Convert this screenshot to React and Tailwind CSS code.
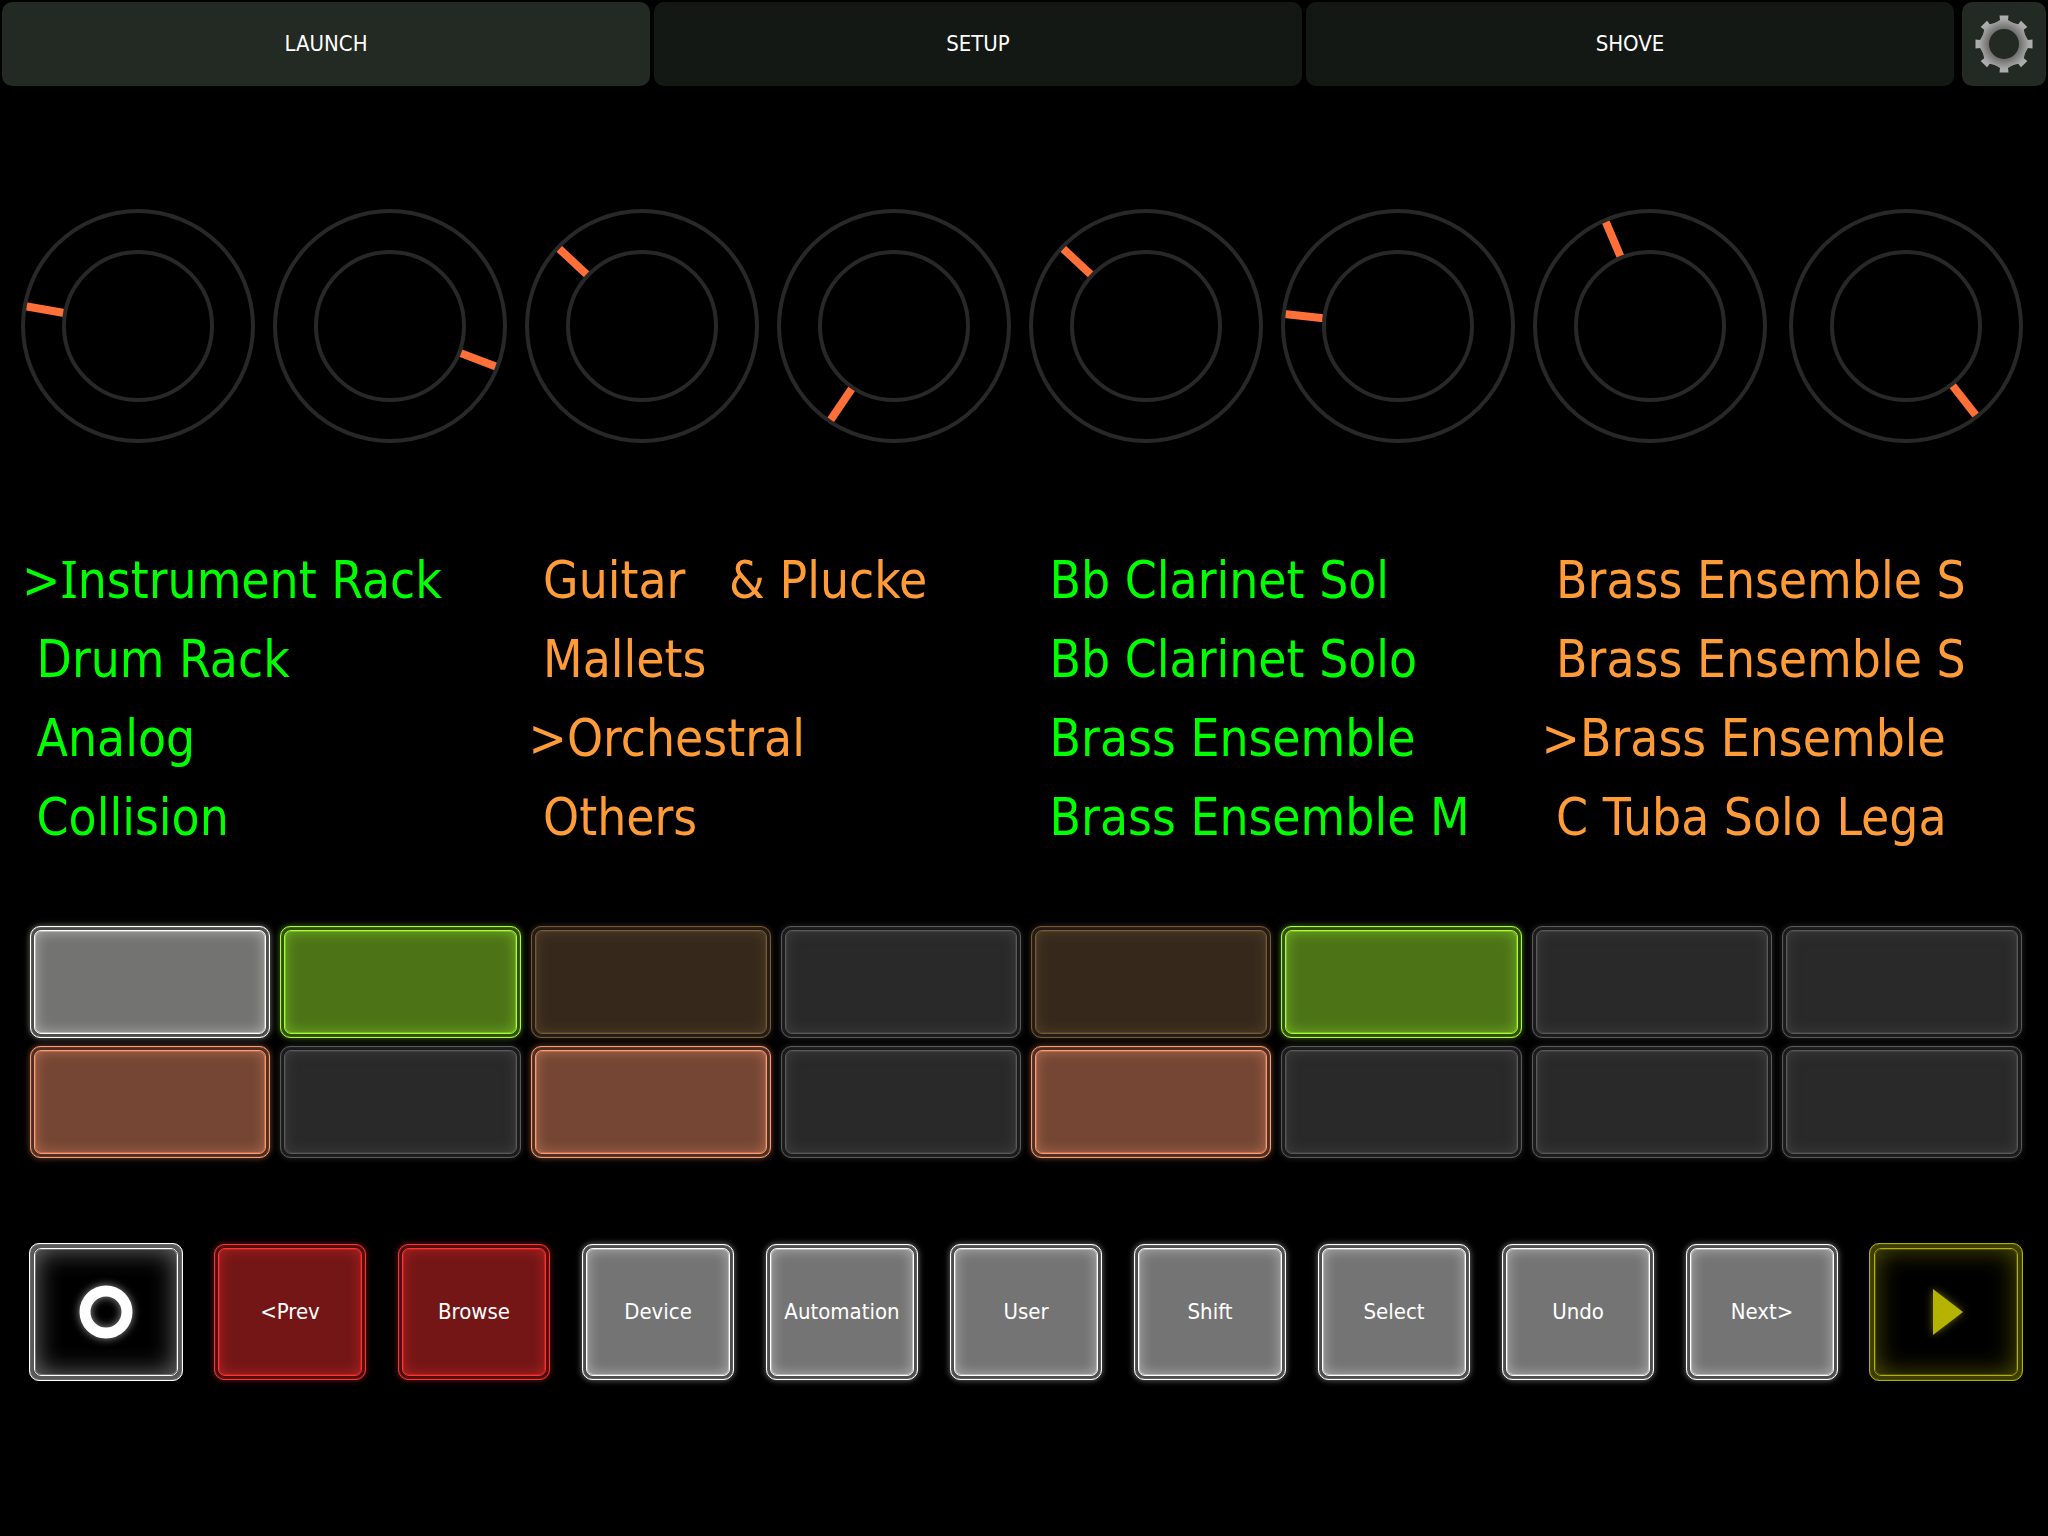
import React from 'react';

const tabs = [
  { label: 'LAUNCH', active: true },
  { label: 'SETUP', active: false },
  { label: 'SHOVE', active: false },
];

// Pointer angles in degrees, clockwise from three o'clock
const knobs = [190, 21, 223, 124, 223, 186, 247, 52];

const screen = [
  { color: 'text-[#00ff00]', lines: ['>Instrument Rack', ' Drum Rack', ' Analog', ' Collision'] },
  { color: 'text-[#ff9c38]', lines: [' Guitar   & Plucke', ' Mallets', '>Orchestral', ' Others'] },
  { color: 'text-[#00ff00]', lines: [' Bb Clarinet Sol', ' Bb Clarinet Solo', ' Brass Ensemble', ' Brass Ensemble M'] },
  { color: 'text-[#ff9c38]', lines: [' Brass Ensemble S', ' Brass Ensemble S', '>Brass Ensemble', ' C Tuba Solo Lega'] },
];

const WHITE = 'text-[#fffffa]';
const GREEN = 'text-[#a6ff33]';
const BROWN = 'text-[#76593a]';
const GREY = 'text-[#595959]';
const SALMON = 'text-[#ff9a72]';
const RED = 'text-[#ff3333]';

const pads = [
  WHITE, GREEN, BROWN, GREY, BROWN, GREEN, GREY, GREY,
  SALMON, GREY, SALMON, GREY, SALMON, GREY, GREY, GREY,
];

const keys = [
  { label: '<Prev', color: RED },
  { label: 'Browse', color: RED },
  { label: 'Device', color: 'text-white' },
  { label: 'Automation', color: 'text-white' },
  { label: 'User', color: 'text-white' },
  { label: 'Shift', color: 'text-white' },
  { label: 'Select', color: 'text-white' },
  { label: 'Undo', color: 'text-white' },
  { label: 'Next>', color: 'text-white' },
];

const Gear = () => (
  <svg viewBox="-30 -30 60 60" className="w-[60px] h-[60px]" aria-hidden="true">
    <defs>
      <radialGradient id="metal" gradientUnits="userSpaceOnUse" cx="0" cy="0" r="29">
        <stop offset="0.5" stopColor="#6a6a6a" />
        <stop offset="0.85" stopColor="#a8a8a8" />
        <stop offset="1" stopColor="#b0b0b0" />
      </radialGradient>
      <mask id="hole">
        <rect x="-30" y="-30" width="60" height="60" fill="white" />
        <circle r="15" fill="black" />
      </mask>
    </defs>
    <g fill="url(#metal)" mask="url(#hole)">
      <circle r="23" />
      {[0, 45, 90, 135, 180, 225, 270, 315].map((a) => (
        <path key={a} d="M-9 -21L-4 -24L-4.5 -28.5H4.5L4 -24L9 -21V-14H-9Z" transform={`rotate(${a})`} />
      ))}
    </g>
  </svg>
);

const Knob = ({ angle, className }) => (
  <div role="slider" aria-label="Encoder" aria-valuenow={angle} aria-valuemin={0} aria-valuemax={360} className={`flex-1 ${className}`}>
    <svg viewBox="-116 -116 232 232" className="block w-full overflow-visible">
      <rect x="75" y="-4" width="39" height="8" fill="#ff6f38" transform={`rotate(${angle})`} />
      <circle r="115" fill="none" stroke="#282828" strokeWidth="4" />
      <circle r="74" fill="none" stroke="#282828" strokeWidth="4" />
    </svg>
  </div>
);

const ScreenLine = ({ text }) => (
  <li className="h-[79px]">
    {text.split(/(I)/).map((part, i) =>
      part === 'I' ? <span key={i} className="font-['Noto_Sans',sans-serif] leading-none">I</span> : part
    )}
  </li>
);

// Double-outlined button that glows in its current text colour
const Pad = ({ color, label, children, className }) => (
  <button
    type="button"
    aria-label={label}
    className={`flex rounded-[10px] border border-current bg-current/30 p-[3px] shadow-[0_0_6px_color-mix(in_srgb,currentColor_45%,transparent),inset_0_0_1px_currentColor] ${color} ${className}`}
  >
    <span className="flex flex-1 self-stretch items-center justify-center rounded-[7px] border border-current bg-current/22 shadow-[inset_0_0_0_1px_color-mix(in_srgb,currentColor_35%,transparent),inset_0_0_14px_color-mix(in_srgb,currentColor_45%,transparent)]">
      {children}
    </span>
  </button>
);

// Transport button: dark face, wider glow
const Transport = ({ color, label, children }) => (
  <button
    type="button"
    aria-label={label}
    className={`-m-px flex h-[138px] rounded-[10px] border border-current bg-current/35 p-1 shadow-[inset_0_0_1px_currentColor] ${color}`}
  >
    <span className="flex flex-1 self-stretch rounded-[7px] bg-black">
      <span className="flex flex-1 items-center justify-center rounded-[7px] border border-current shadow-[inset_0_0_0_1px_color-mix(in_srgb,currentColor_25%,transparent),inset_0_0_26px_color-mix(in_srgb,currentColor_45%,transparent)]">
        {children}
      </span>
    </span>
  </button>
);

const App = () => {
  return (
    <div className="min-h-screen bg-black font-['DejaVu_Sans_Condensed','Noto_Sans',sans-serif]">
      {/* Page tabs */}
      <nav className="flex gap-2 p-0.5">
        <div className="flex flex-1 gap-1">
          {tabs.map((tab) => (
            <button
              key={tab.label}
              type="button"
              className={`h-[84px] flex-1 rounded-[10px] pb-0.5 text-[22px] text-white ${tab.active ? 'bg-[#232923]' : 'bg-[#141814]'}`}
            >
              {tab.label}
            </button>
          ))}
        </div>
        <button type="button" aria-label="Settings" className="flex h-[84px] w-[84px] items-center justify-center rounded-[10px] bg-[#232923]">
          <Gear />
        </button>
      </nav>

      <main>
        {/* Encoders */}
        <section className="mt-[122px] flex gap-5 pl-[22px] pr-[26px]">
          {knobs.map((angle, i) => (
            <Knob key={i} angle={angle} className={i === 7 ? 'ml-1' : ''} />
          ))}
        </section>

        {/* Browser display */}
        <section className="mt-[99px] grid grid-cols-4 pl-[22px]">
          {screen.map((column, i) => (
            <ul key={i} className={`whitespace-pre text-[51px] leading-[79px] ${column.color}`}>
              {column.lines.map((line, j) => (
                <ScreenLine key={j} text={line} />
              ))}
            </ul>
          ))}
        </section>

        {/* Display buttons */}
        <section className="mt-[69px] grid grid-cols-8 gap-x-[10px] gap-y-2 pl-[30px] pr-[26px]">
          {pads.map((color, i) => (
            <Pad key={i} color={color} label={`Pad ${i + 1}`} className="h-28" />
          ))}
        </section>

        {/* Transport and mode keys */}
        <section className="mt-[86px] grid grid-cols-11 gap-8 pl-[30px] pr-[26px]">
          <Transport color="text-white" label="Record">
            <svg viewBox="-40 -40 80 80" className="w-20 overflow-visible drop-shadow-[0_0_4px_#ffffff90]" aria-hidden="true">
              <circle r="21" fill="none" stroke="currentColor" strokeWidth="11" />
            </svg>
          </Transport>
          {keys.map((key) => (
            <Pad key={key.label} color={key.color} className="h-[136px]">
              <span className="pb-0.5 text-[22px] text-white">{key.label}</span>
            </Pad>
          ))}
          <Transport color="text-[#b3b300]" label="Play">
            <svg viewBox="-40 -40 80 80" className="w-20 overflow-visible drop-shadow-[0_0_4px_#b3b30090]" aria-hidden="true">
              <path d="M-13 -23L17 0L-13 23Z" fill="currentColor" />
            </svg>
          </Transport>
        </section>
      </main>
    </div>
  );
};

export default App;
